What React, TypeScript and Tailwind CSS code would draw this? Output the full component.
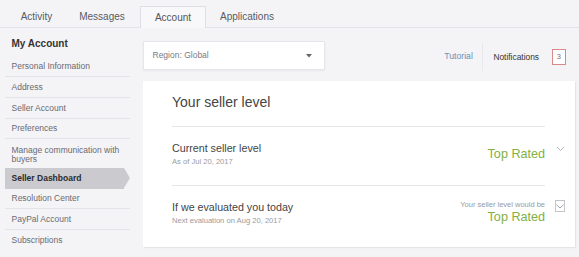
import React from "react";

const sideItems = ["Personal Information", "Address", "Seller Account", "Preferences"];

function ChevronDown({ className = "" }: { className?: string }) {
  return (
    <svg width="9" height="6" viewBox="0 0 9 6" className={className}>
      <path d="M1 1 L4.5 4.5 L8 1" fill="none" stroke="#b5b5ba" strokeWidth="1" />
    </svg>
  );
}

export default function App() {
  return (
    <div
      className="w-[579px] h-[257px] overflow-hidden bg-[#f4f4f7] text-[#444]"
      style={{ fontFamily: '"Liberation Sans", Arial, sans-serif' }}
    >
      {/* Tab bar */}
      <div className="h-[28px] border-b border-[#e3e3e7] flex items-end pl-[4px] text-[10px] text-[#5a5a5f]">
        <div className="w-[65px] h-[21px] flex items-center justify-center">Activity</div>
        <div className="w-[66px] h-[21px] flex items-center justify-center">Messages</div>
        <div className="ml-[5px] w-[66px] h-[22px] -mb-[1px] flex items-center justify-center bg-[#f8f8fa] border border-b-0 border-[#dedee3] text-[#555]">
          Account
        </div>
        <div className="w-[82px] h-[21px] flex items-center justify-center">Applications</div>
      </div>

      <div className="flex">
        {/* Sidebar */}
        <div className="w-[130px] pl-[5px] shrink-0">
          <div className="pt-[10px] pl-[6.5px] text-[10px] leading-[12px] font-bold text-[#333]">My Account</div>
          <div className="mt-[6.7px]">
            {sideItems.map((t) => (
              <div
                key={t}
                className="h-[20.7px] border-b border-[#e4e4e8] flex items-center pl-[6.5px] text-[8.5px] text-[#6a6a70]"
              >
                {t}
              </div>
            ))}
            <div className="h-[28.7px] pt-[7px] pl-[6.5px] text-[8.5px] leading-[8.6px] text-[#6a6a70]">
              Manage communication with
              <br />
              buyers
            </div>
            <div className="flex h-[21px]">
              <div className="flex-1 bg-[#cbcbcf] flex items-center pl-[6.5px] text-[8.5px] font-bold text-[#2a2a2e]">
                Seller Dashboard
              </div>
              <div className="w-0 h-0 border-y-[10.5px] border-y-transparent border-l-[6px] border-l-[#cbcbcf]" />
            </div>
            <div className="h-[20px] border-b border-[#e4e4e8] flex items-center pl-[6.5px] text-[8.5px] text-[#6a6a70]">
              Resolution Center
            </div>
            <div className="h-[20.5px] border-b border-[#e4e4e8] flex items-center pl-[6.5px] text-[8.5px] text-[#6a6a70]">
              PayPal Account
            </div>
            <div className="h-[20.5px] flex items-center pl-[6.5px] text-[8.5px] text-[#6a6a70]">
              Subscriptions
            </div>
          </div>
        </div>

        {/* Main */}
        <div className="flex-1 pl-[13px] pr-[4px] pt-[13px]">
          <div className="flex items-center h-[29px]">
            <div className="w-[182px] h-[29px] bg-white border border-[#e6e6ea] shadow-[0_1px_2px_rgba(0,0,0,0.05)] flex items-center justify-between pl-[8.5px] pr-[12px]">
              <span className="text-[8.5px] text-[#7a7a80]">Region: Global</span>
              <svg width="6" height="4" viewBox="0 0 6 4">
                <path d="M0 0 L6 0 L3 3.5 Z" fill="#666" />
              </svg>
            </div>
            <div className="flex-1" />
            <div className="flex items-center h-[29px] pt-[3px]">
              <span className="text-[8.7px] text-[#6c8fb2]">Tutorial</span>
              <div className="ml-[9px] w-px h-[28px] bg-[#e8e8ec]" />
              <span className="ml-[10.5px] text-[8.4px] text-[#333]">Notifications</span>
              <div className="ml-[12.5px] mr-[9px] w-[14.5px] h-[15.5px] border border-[#d98a88] bg-white flex items-center justify-center text-[7.5px] text-[#8a6a6a]">
                3
              </div>
            </div>
          </div>

          {/* Card */}
          <div className="mt-[11px] bg-white h-[166px] pl-[29px] shadow-[1px_1px_1px_rgba(0,0,0,0.06)]">
            <div className="flex h-[46px]">
              <div className="flex-1 border-b border-[#e6e6e9] pt-[13px] text-[14px] leading-[16px] text-[#444]">
                Your seller level
              </div>
              <div className="w-[30px]" />
            </div>

            <div className="flex h-[59px]">
              <div className="flex-1 border-b border-[#e6e6e9] flex justify-between">
                <div className="pt-[14.5px]">
                  <div className="text-[10.7px] leading-[13px] text-[#444]">Current seller level</div>
                  <div className="mt-[2.5px] text-[7.6px] leading-[10px] text-[#9a9aa0]">As of Jul 20, 2017</div>
                </div>
                <div className="pt-[20px] text-[12.6px] leading-[15px] text-[#82b044]">Top Rated</div>
              </div>
              <div className="w-[30px] flex justify-center pt-[19px]">
                <ChevronDown />
              </div>
            </div>

            <div className="flex h-[61px]">
              <div className="flex-1 flex justify-between">
                <div className="pt-[14.5px]">
                  <div className="text-[10.7px] leading-[13px] text-[#444]">If we evaluated you today</div>
                  <div className="mt-[2.5px] text-[7.6px] leading-[10px] text-[#9a9aa0]">
                    Next evaluation on Aug 20, 2017
                  </div>
                </div>
                <div className="pt-[14px] flex flex-col items-end">
                  <div className="text-[7.5px] leading-[10px] text-[#9a9aa0]">Your seller level would be</div>
                  <div className="mt-[0px] text-[12.6px] leading-[15px] text-[#82b044]">Top Rated</div>
                </div>
              </div>
              <div className="w-[30px] flex justify-center pt-[14px]">
                <div className="w-[10px] h-[12px] border border-[#c4c4c9] flex items-center justify-center">
                  <svg width="8" height="5" viewBox="0 0 8 5">
                    <path d="M0.5 0.8 L4 4 L7.5 0.8" fill="none" stroke="#a5a5aa" strokeWidth="1" />
                  </svg>
                </div>
              </div>
            </div>
          </div>
        </div>
      </div>
    </div>
  );
}
